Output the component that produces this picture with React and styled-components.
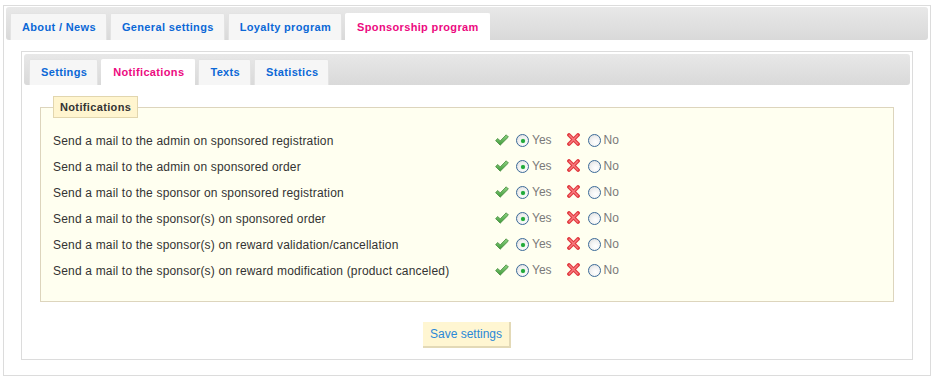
import React from 'react'
import styled, { createGlobalStyle } from 'styled-components'

const GlobalStyle = createGlobalStyle`
  body {
    margin: 0;
    background: #fff;
    font-family: "Liberation Sans", Arial, sans-serif;
  }
`

const Outer = styled.div`
  margin: 5px 0 0 3px;
  width: 928px;
  box-sizing: border-box;
  border: 1px solid #dcdcdc;
  padding: 1px 2px 0;
`

const TabBar = styled.div`
  display: flex;
  align-items: flex-end;
  gap: ${(p) => p.gap}px;
  height: ${(p) => p.height}px;
  box-sizing: border-box;
  padding-left: ${(p) => p.padLeft}px;
  background: linear-gradient(#e8e8e8, #d9d9d9);
  border-radius: 3px;
`

const Tab = styled.div`
  height: ${(p) => p.height}px;
  box-sizing: border-box;
  display: flex;
  align-items: center;
  padding: 0 10px 1px 11px;
  font-size: 11px;
  letter-spacing: 0.35px;
  font-weight: bold;
  color: ${(p) => (p.active ? '#ec0a80' : '#0b68d6')};
  background: ${(p) => (p.active ? '#ffffff' : '#f6f6f6')};
  border: 1px solid ${(p) => (p.active ? '#ffffff' : '#e3e3e3')};
  border-bottom: none;
  border-radius: 2px 2px 0 0;
  white-space: nowrap;
  cursor: pointer;
`

const OuterBody = styled.div`
  padding: 11px 15px 15px 15px;
`

const Panel = styled.div`
  border: 1px solid #dcdcdc;
  padding: 2px 2px 0;
`

const PanelBody = styled.div`
  padding: 11px 16px 11px;
  display: flex;
  flex-direction: column;
  align-items: center;
`

const Fieldset = styled.fieldset`
  margin: 0;
  align-self: stretch;
  border: 1px solid #ddd5bd;
  background: #fffff0;
  padding: 10px 12px 17px;
`

const Legend = styled.legend`
  height: 22px;
  box-sizing: border-box;
  padding: 0 6px;
  line-height: 20px;
  font-size: 11px;
  letter-spacing: 0.35px;
  font-weight: bold;
  color: #333;
  background: #fff5cf;
  border: 1px solid #e2d6ae;
`

const Row = styled.div`
  display: grid;
  grid-template-columns: 442px auto;
  align-items: center;
  height: 26px;
`

const Label = styled.div`
  font-size: 12px;
  letter-spacing: 0.18px;
  color: #333;
`

const Controls = styled.div`
  display: flex;
  align-items: center;
  padding-bottom: 3px;
`

const Choice = styled.label`
  display: flex;
  align-items: center;
  margin-right: ${(p) => p.spacing}px;
  font-size: 12px;
  color: #7a7a7a;
`

const IconWrap = styled.span`
  display: flex;
  margin-right: ${(p) => p.gap}px;
`

const Radio = styled.input`
  appearance: none;
  margin: 2px 3px 0 0;
  width: 13px;
  height: 13px;
  border-radius: 50%;
  border: 1px solid #3b6a98;
  background: radial-gradient(circle at 60% 65%, #ffffff 0, #f3f3f3 45%, #d8d8d8 100%);
  box-sizing: border-box;
  display: grid;
  place-items: center;
  &:checked::after {
    content: '';
    width: 4px;
    height: 4px;
    border-radius: 50%;
    background: #22a83a;
    box-shadow: 0 0 1px #4fd060;
  }
`

const SaveButton = styled.button`
  margin-top: 20px;
  height: 26px;
  padding: 0 7px 1px 7px;
  font-family: "Liberation Sans", Arial, sans-serif;
  font-size: 12px;
  color: #2a88d8;
  background: #fff6d2;
  border: none;
  border-right: 2px solid #e3d9b6;
  border-bottom: 2px solid #e3d9b6;
  cursor: pointer;
`

const CheckIcon = () => (
  <svg width="14" height="12" viewBox="0 0 14 12">
    <defs>
      <linearGradient id="chk" x1="0" y1="0" x2="0" y2="1">
        <stop offset="0" stopColor="#8fd483" />
        <stop offset="1" stopColor="#3f9a3a" />
      </linearGradient>
    </defs>
    <polygon
      points="0.6,6.6 2.8,4.5 5.2,6.9 11.2,0.8 13.4,3 5.2,11.2"
      fill="url(#chk)"
      stroke="#458a3c"
      strokeWidth="0.8"
      strokeLinejoin="round"
    />
  </svg>
)

const CrossIcon = () => (
  <svg width="13" height="13" viewBox="0 0 13 13">
    <g strokeLinecap="round">
      <line x1="2" y1="2" x2="11" y2="11" stroke="#e0393f" strokeWidth="3.8" />
      <line x1="11" y1="2" x2="2" y2="11" stroke="#e0393f" strokeWidth="3.8" />
      <line x1="2.3" y1="2.3" x2="10.7" y2="10.7" stroke="#f77a7e" strokeWidth="1.4" />
      <line x1="10.7" y1="2.3" x2="2.3" y2="10.7" stroke="#f77a7e" strokeWidth="1.4" />
    </g>
  </svg>
)

const mainTabs = ['About / News', 'General settings', 'Loyalty program', 'Sponsorship program']
const subTabs = ['Settings', 'Notifications', 'Texts', 'Statistics']

const notifications = [
  'Send a mail to the admin on sponsored registration',
  'Send a mail to the admin on sponsored order',
  'Send a mail to the sponsor on sponsored registration',
  'Send a mail to the sponsor(s) on sponsored order',
  'Send a mail to the sponsor(s) on reward validation/cancellation',
  'Send a mail to the sponsor(s) on reward modification (product canceled)',
]

const App = () => {
  return (
    <>
      <GlobalStyle />
      <Outer>
        <TabBar height={33} padLeft={4} gap={3}>
          {mainTabs.map((t, i) => (
            <Tab key={t} height={27} active={i === 3}>
              {t}
            </Tab>
          ))}
        </TabBar>
        <OuterBody>
          <Panel>
            <TabBar height={31} padLeft={5} gap={3}>
              {subTabs.map((t, i) => (
                <Tab key={t} height={26} active={i === 1}>
                  {t}
                </Tab>
              ))}
            </TabBar>
            <PanelBody>
              <Fieldset>
                <Legend>Notifications</Legend>
                {notifications.map((text, i) => (
                  <Row key={i}>
                    <Label>{text}</Label>
                    <Controls>
                      <Choice spacing={15}>
                        <IconWrap gap={7}>
                          <CheckIcon />
                        </IconWrap>
                        <Radio type="radio" name={`notif${i}`} defaultChecked />
                        Yes
                      </Choice>
                      <Choice spacing={0}>
                        <IconWrap gap={8}>
                          <CrossIcon />
                        </IconWrap>
                        <Radio type="radio" name={`notif${i}`} />
                        No
                      </Choice>
                    </Controls>
                  </Row>
                ))}
              </Fieldset>
              <SaveButton>Save settings</SaveButton>
            </PanelBody>
          </Panel>
        </OuterBody>
      </Outer>
    </>
  )
}

export default App
